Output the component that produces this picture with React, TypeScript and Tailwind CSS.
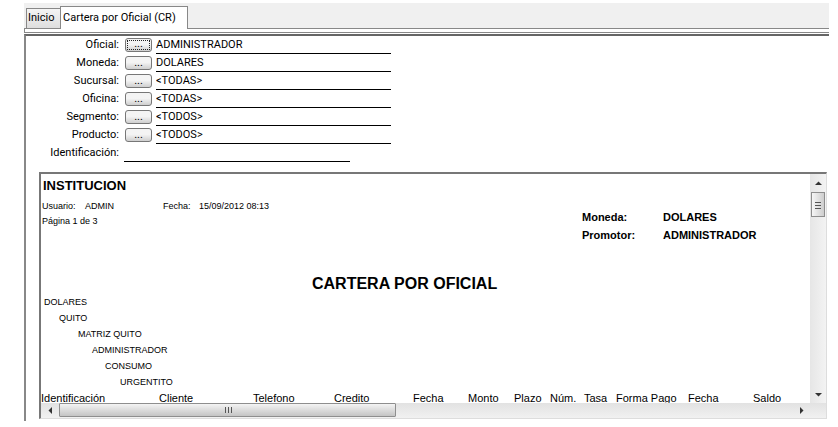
import { useState } from 'react';

interface Filter {
  id: string;
  label: string;
  value: string;
}

const filters: Filter[] = [
  { id: 'oficial', label: 'Oficial:', value: 'ADMINISTRADOR' },
  { id: 'moneda', label: 'Moneda:', value: 'DOLARES' },
  { id: 'sucursal', label: 'Sucursal:', value: '<TODAS>' },
  { id: 'oficina', label: 'Oficina:', value: '<TODAS>' },
  { id: 'segmento', label: 'Segmento:', value: '<TODOS>' },
  { id: 'producto', label: 'Producto:', value: '<TODOS>' },
];

const groups = [
  { name: 'DOLARES', indent: 'pl-[3px]' },
  { name: 'QUITO', indent: 'pl-[18px]' },
  { name: 'MATRIZ QUITO', indent: 'pl-[37px]' },
  { name: 'ADMINISTRADOR', indent: 'pl-[51px]' },
  { name: 'CONSUMO', indent: 'pl-[64px]' },
  { name: 'URGENTITO', indent: 'pl-[79px]' },
];

const columns = [
  { name: 'Identificación', width: 'w-[118px]' },
  { name: 'Cliente', width: 'w-[94px]' },
  { name: 'Telefono', width: 'w-[81px]' },
  { name: 'Credito', width: 'w-[79px]' },
  { name: 'Fecha', width: 'w-[55px]' },
  { name: 'Monto', width: 'w-[46px]' },
  { name: 'Plazo', width: 'w-[36px]' },
  { name: 'Núm.', width: 'w-[34px]' },
  { name: 'Tasa', width: 'w-[32px]' },
  { name: 'Forma Pago', width: 'w-[72px]' },
  { name: 'Fecha', width: 'w-[65px]' },
  { name: 'Saldo', width: 'w-[58px]' },
];

function FilterRow({ filter, focused }: { filter: Filter; focused: boolean }) {
  const [value, setValue] = useState(filter.value);

  return (
    <div className="flex h-[18px] items-center">
      <label htmlFor={filter.id} className="w-[93px] shrink-0 text-right">
        {filter.label}
      </label>
      <button
        type="button"
        aria-label={`Buscar ${filter.id}`}
        className="ml-[6px] h-[14px] w-[27px] shrink-0 rounded-[3px] border border-[#777] bg-linear-to-b from-[#f4f4f4] from-45% to-[#cfcfcf] p-px"
      >
        <span
          className={
            focused
              ? 'flex h-full items-end justify-center border border-dotted border-[#222] leading-[10px]'
              : 'flex h-full items-end justify-center leading-[10px]'
          }
        >
          ...
        </span>
      </button>
      <input
        id={filter.id}
        value={value}
        onChange={(e) => setValue(e.target.value)}
        className="ml-1 h-[18px] w-[235px] border-b border-black bg-transparent leading-4 outline-none"
      />
    </div>
  );
}

function Arrow({ points }: { points: string }) {
  return (
    <svg width="7" height="7" viewBox="0 0 7 7" fill="#333">
      <polygon points={points} />
    </svg>
  );
}

function VerticalScrollbar() {
  return (
    <div className="flex w-4 shrink-0 flex-col items-center bg-linear-to-r from-[#e6e6e6] to-[#f3f3f3]">
      <button type="button" aria-label="Subir" className="flex h-[18px] w-full items-center justify-center">
        <Arrow points="0,5 3.5,1.5 7,5" />
      </button>
      <div className="flex h-[25px] w-[14px] flex-col items-center justify-center gap-px border border-[#8e8e8e] bg-linear-to-r from-[#f6f6f6] to-[#cecece]">
        <div className="h-[2px] w-[6px] border-b border-[#555]" />
        <div className="h-[2px] w-[6px] border-b border-[#555]" />
        <div className="h-[2px] w-[6px] border-b border-[#555]" />
      </div>
      <div className="flex-1" />
      <button type="button" aria-label="Bajar" className="flex h-[18px] w-full items-center justify-center">
        <Arrow points="0,2 3.5,5.5 7,2" />
      </button>
    </div>
  );
}

function HorizontalScrollbar() {
  return (
    <div className="flex h-[15px] bg-linear-to-b from-[#e2e2e2] to-[#f1f1f1] pr-4">
      <button type="button" aria-label="Izquierda" className="flex w-[18px] items-center justify-center">
        <Arrow points="5,0 1.5,3.5 5,7" />
      </button>
      <div className="flex-1">
        <div className="flex h-[14px] w-[46%] items-center justify-center gap-px rounded-[1px] border border-[#8e8e8e] bg-linear-to-b from-[#f4f4f4] to-[#c4c4c4]">
          <div className="h-[6px] w-[2px] border-r border-[#555]" />
          <div className="h-[6px] w-[2px] border-r border-[#555]" />
          <div className="h-[6px] w-[2px] border-r border-[#555]" />
        </div>
      </div>
      <button type="button" aria-label="Derecha" className="flex w-[18px] items-center justify-center">
        <Arrow points="2,0 5.5,3.5 2,7" />
      </button>
    </div>
  );
}

function Report() {
  return (
    <section className="mt-[10px] mr-[2px] ml-[13px] border-t-2 border-r border-b border-l-2 border-t-[#777] border-r-[#ddd] border-b-[#ddd] border-l-[#777] font-['Liberation_Sans',sans-serif]">
      <div className="flex">
        <div className="min-w-0 flex-1 overflow-hidden">
          <header className="flex h-[100px] pt-1">
            <div className="w-[541px] shrink-0">
              <h2 className="pl-[2px] text-[13px] leading-4 font-bold">INSTITUCION</h2>
              <div className="mt-[5px] flex pl-px text-[9px] leading-[15px]">
                <span className="w-[43px]">Usuario:</span>
                <span className="w-[78px]">ADMIN</span>
                <span className="w-[36px]">Fecha:</span>
                <span>15/09/2012 08:13</span>
              </div>
              <p className="pl-px text-[9px] leading-[15px]">Página 1 de 3</p>
            </div>
            <dl className="grid grid-cols-[81px_auto] content-start pt-[30px] text-[11px] leading-[18px] font-bold">
              <dt>Moneda:</dt>
              <dd>DOLARES</dd>
              <dt>Promotor:</dt>
              <dd>ADMINISTRADOR</dd>
            </dl>
          </header>
          <h1 className="pl-[271px] text-[16px] leading-5 font-bold whitespace-nowrap">CARTERA POR OFICIAL</h1>
          <ul className="text-[9px] leading-4">
            {groups.map((group) => (
              <li key={group.name} className={group.indent}>
                {group.name}
              </li>
            ))}
          </ul>
          <div className="h-[13px] overflow-hidden">
            <table className="w-[770px] table-fixed text-left text-[11px] leading-4">
              <thead>
                <tr>
                  {columns.map((column, i) => (
                    <th key={i} className={`${column.width} p-0 font-normal whitespace-nowrap`}>
                      {column.name}
                    </th>
                  ))}
                </tr>
              </thead>
            </table>
          </div>
        </div>
        <VerticalScrollbar />
      </div>
      <HorizontalScrollbar />
    </section>
  );
}

export default function App() {
  const [identificacion, setIdentificacion] = useState('');

  return (
    <div className="bg-white pt-[3px] pr-[9px] pl-6 font-[Roboto,sans-serif] text-[11px] text-black">
      <nav className="flex h-[26px] items-end border-b border-[#888] bg-[#f0f0f0]">
        <button
          type="button"
          className="ml-[2px] h-5 w-[34px] border-t border-l border-[#888] bg-linear-to-b from-[#f4f4f4] to-[#dedede] pl-px text-left"
        >
          Inicio
        </button>
        <button
          type="button"
          className="-mb-px h-[23px] w-32 border border-b-0 border-[#888] bg-white pl-[2px] text-left"
        >
          Cartera por Oficial (CR)
        </button>
      </nav>
      <div className="h-1 border-b border-l border-[#888]" />

      <main className="mt-px border-t-2 border-l-2 border-t-[#666] border-l-[#888] pb-[2px]">
        <form onSubmit={(e) => e.preventDefault()}>
          {filters.map((filter, i) => (
            <FilterRow key={filter.id} filter={filter} focused={i === 0} />
          ))}
          <div className="flex h-[18px] items-center">
            <label htmlFor="identificacion" className="w-[93px] shrink-0 text-right">
              Identificación:
            </label>
            <input
              id="identificacion"
              value={identificacion}
              onChange={(e) => setIdentificacion(e.target.value)}
              className="ml-[5px] h-[18px] w-[226px] border-b border-black bg-transparent leading-4 outline-none"
            />
          </div>
        </form>
        <Report />
      </main>
    </div>
  );
}
